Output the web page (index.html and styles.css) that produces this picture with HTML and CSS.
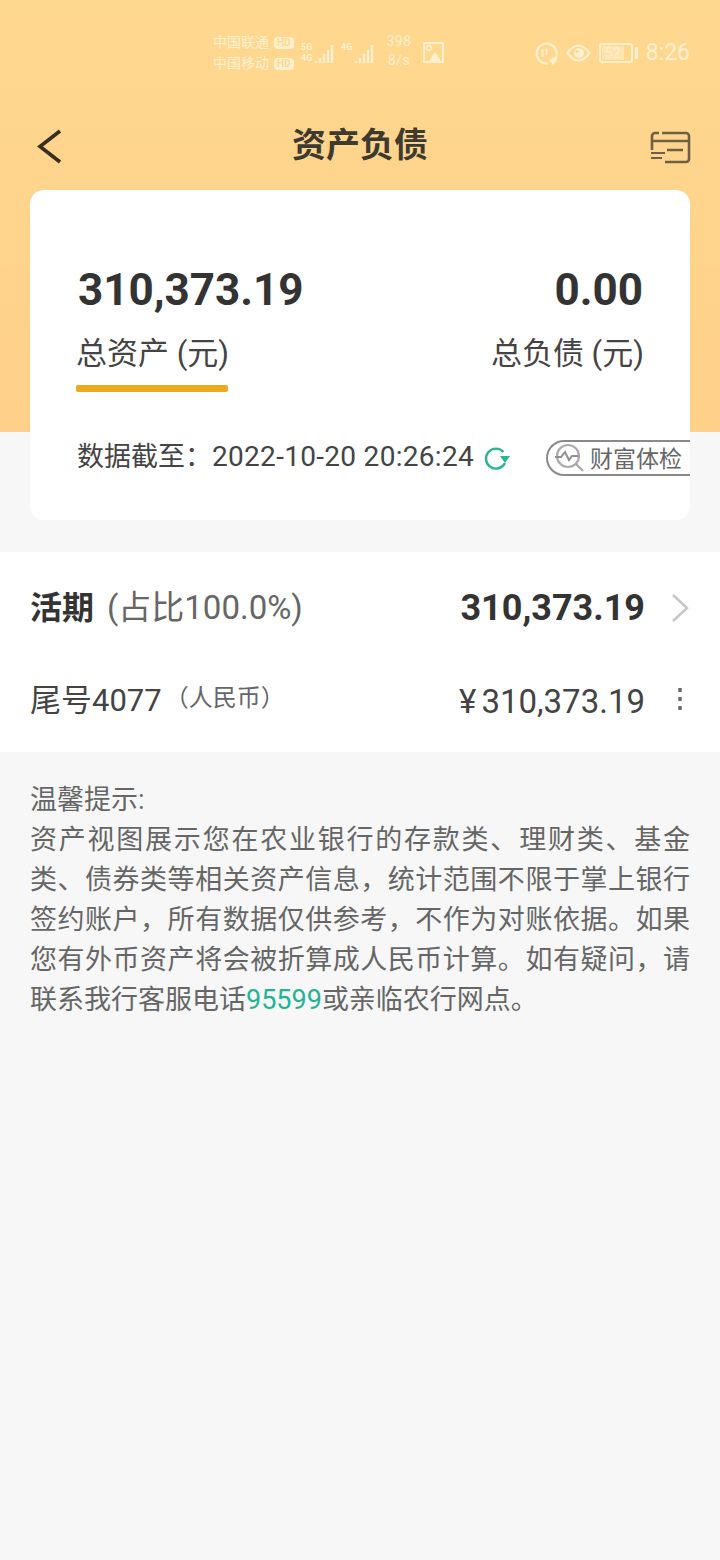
FILE: index.html
```html
<!DOCTYPE html>
<html>
<head>
    <title>资产负债</title>
    <link rel="stylesheet" href="styles.css">
</head>

<body>
    <div class="statusBar">
        <div class="carriers">
            <div class="carrier">中国联通<span class="hd">HD</span></div>
            <div class="carrier">中国移动<span class="hd">HD</span></div>
        </div>
        <div class="signal">
            <div class="signalLabel"><span>5G</span><span>4G</span></div>
            <svg width="20" height="22" viewBox="0 0 20 22"><path d="M2 21v-2M6 21v-5M10 21v-9M14 21v-13M18 21v-18" stroke="#fff0d0" stroke-width="2.400" fill="none"/></svg>
        </div>
        <div class="signal">
            <div class="signalLabel"><span>4G</span><span>&nbsp;</span></div>
            <svg width="20" height="22" viewBox="0 0 20 22"><path d="M2 21v-2M6 21v-5M10 21v-9M14 21v-13M18 21v-18" stroke="#fff0d0" stroke-width="2.400" fill="none"/></svg>
        </div>
        <div class="speed">398<br>8/s</div>
        <svg class="picIcon" width="21" height="21" viewBox="0 0 21 21">
            <rect x="1" y="1" width="19" height="19" fill="none" stroke="#fff0d0" stroke-width="2"/>
            <circle cx="6" cy="6" r="2.500" fill="none" stroke="#fff0d0" stroke-width="1.300"/>
            <path d="M6 19l6-9 6 9z" fill="#fff0d0"/>
        </svg>
        <div class="statusRight">
            <svg width="23" height="23" viewBox="0 0 23 23">
                <path d="M13 21.500a10 10 0 1 1 8.500-8" fill="none" stroke="#fff0d0" stroke-width="2.200"/>
                <path d="M7.500 7v8M11.500 6.500v7" stroke="#fff0d0" stroke-width="1.800"/>
                <path d="M14 18l8-4v4l-4 5z" fill="#fff0d0"/>
            </svg>
            <svg width="25" height="18" viewBox="0 0 25 18">
                <path d="M1.500 9C5 4 9 1.500 12.500 1.500S20 4 23.500 9C20 14 16 16.500 12.500 16.500S5 14 1.500 9z" fill="none" stroke="#fff0d0" stroke-width="2.200"/>
                <circle cx="13" cy="9" r="5" fill="#fff0d0"/>
                <circle cx="11" cy="7.500" r="1.500" fill="#ffd88f"/>
            </svg>
            <div class="battery"><div class="batteryBody"><div class="batteryFill">52</div></div><div class="batteryTip"></div></div>
            <div class="clock">8:26</div>
        </div>
    </div>

    <div class="titleBar">
        <svg class="backIcon" width="26" height="36" viewBox="0 0 26 36"><path d="M24 2L4 17.500 24 33" fill="none" stroke="#3a2d1f" stroke-width="3.600"/></svg>
        <div class="pageTitle">资产负债</div>
        <svg class="cardIcon" width="42" height="34" viewBox="0 0 42 34">
            <path d="M2 20V6a3 3 0 0 1 3-3h4M12 3h24a3 3 0 0 1 3 3v23a3 3 0 0 1-3 3H15" fill="none" stroke="#6f6045" stroke-width="2.600"/>
            <path d="M3 11h36M17 20h16" stroke="#6f6045" stroke-width="2.600" fill="none"/>
            <path d="M1 23h14M1 28h11" stroke="#6f6045" stroke-width="2" fill="none"/>
        </svg>
    </div>

    <div class="summaryCard">
        <div class="totals">
            <div class="totalBlock">
                <div class="totalValue">310,373.19</div>
                <div class="totalLabel labelLeft">总资产 (元)</div>
                <div class="activeLine"></div>
            </div>
            <div class="totalBlock alignRight">
                <div class="totalValue">0.00</div>
                <div class="totalLabel labelRight">总负债 (元)</div>
            </div>
        </div>
        <div class="dataRow">
            <span class="dataDate">数据截至：<span class="dateDigits">2022-10-20 20:26:24</span></span>
            <svg class="refreshIcon" width="26" height="26" viewBox="0 0 26 26">
                <path d="M21 18a10 10 0 1 1-1.500-11" fill="none" stroke="#2cb592" stroke-width="2.400"/>
                <path d="M16 11h10l-5 7z" fill="#2cb592"/>
            </svg>
            <div class="checkButton">
                <svg width="32" height="32" viewBox="0 0 32 32">
                    <circle cx="15" cy="14" r="11" fill="none" stroke="#ababab" stroke-width="2.200"/>
                    <path d="M23 22l7 7" stroke="#ababab" stroke-width="2.400"/>
                    <path d="M2 15h6l4-5 4 8 3-4h6" fill="none" stroke="#8f8f8f" stroke-width="2"/>
                </svg>
                <span class="checkLabel">财富体检</span>
            </div>
        </div>
    </div>

    <div class="accountPanel">
        <div class="accountHead">
            <div class="headLeft"><span class="headName">活期</span><span class="headShare">(占比100.0%)</span></div>
            <div class="rowEnd">
                <span class="headAmount">310,373.19</span>
                <svg class="rowIcon" width="20" height="30" viewBox="0 0 20 30"><path d="M3 2l14 13L3 28" fill="none" stroke="#c6c6c6" stroke-width="2.400"/></svg>
            </div>
        </div>
        <div class="accountRow">
            <div class="rowLeft"><span class="tailNo">尾号4077</span><span class="currency">（人民币）</span></div>
            <div class="rowEnd">
                <span class="rowAmount"><span class="yen">¥</span>310,373.19</span>
                <svg class="rowIcon" width="20" height="26" viewBox="0 0 20 26"><path d="M10 2v4M10 11v4M10 20v4" stroke="#666" stroke-width="3.400" fill="none"/></svg>
            </div>
        </div>
    </div>

    <div class="notice">
        <div>温馨提示:</div>
        <div class="noticeText">资产视图展示您在农业银行的存款类、理财类、基金类、债券类等相关资产信息，统计范围不限于掌上银行签约账户，所有数据仅供参考，不作为对账依据。如果您有外币资产将会被折算成人民币计算。如有疑问，请联系我行客服电话<span class="phone">95599</span>或亲临农行网点。</div>
    </div>
</body>

</html>
```

FILE: styles.css
```css
html, body {
    margin: 0;
    padding: 0;
}

body {
    width: 720px;
    height: 1560px;
    overflow: hidden;
    background: linear-gradient(#ffd88f, #ffd08a) no-repeat 0 0 / 720px 432px, #f7f7f7;
    font-family: Roboto, "Noto Sans CJK SC", sans-serif;
    color: #333;
}

.statusBar {
    height: 106px;
    box-sizing: border-box;
    padding: 32px 30px 0 213px;
    display: flex;
    align-items: flex-start;
    color: #fff0d0;
}

.carriers {
    width: 88px;
    font-size: 14px;
    line-height: 21px;
}

.carrier {
    display: flex;
    align-items: center;
    white-space: nowrap;
}

.hd {
    margin-left: 5px;
    background: #fff0d0;
    color: #ffd88f;
    border-radius: 4px;
    font-size: 10px;
    line-height: 12px;
    padding: 0 3px;
    font-weight: 700;
}

.signal {
    flex: none;
    width: 34px;
    margin-top: 8px;
    display: flex;
    align-items: flex-end;
    height: 24px;
}

.signal + .signal {
    margin-left: 6px;
}

.signalLabel {
    width: 13px;
    font-size: 9px;
    line-height: 11px;
    font-weight: 700;
}

.signalLabel span {
    display: block;
}

.speed {
    margin-left: 10px;
    width: 28px;
    font-size: 14px;
    line-height: 19px;
    text-align: center;
    letter-spacing: 0.5px;
}

.picIcon {
    margin-left: 10px;
    margin-top: 10px;
}

.statusRight {
    position: absolute;
    right: 30px;
    top: 40px;
    display: flex;
    align-items: center;
    height: 26px;
    gap: 8px;
}

.battery {
    display: flex;
    align-items: center;
}

.batteryBody {
    width: 28px;
    height: 14px;
    border: 2px solid #fff0d0;
    border-radius: 3px;
    padding: 1px;
}

.batteryFill {
    width: 22px;
    height: 14px;
    background: #ffe4ab;
    font-size: 14px;
    line-height: 14px;
    text-align: center;
    color: #fff0d0;
}

.batteryTip {
    width: 3px;
    height: 12px;
    margin-left: 2px;
    background: #fff0d0;
    border-radius: 1px;
}

.clock {
    font-size: 23px;
    line-height: 26px;
    color: #fff0d0;
}

.titleBar {
    height: 84px;
    display: flex;
    align-items: center;
    justify-content: center;
    position: relative;
}

.pageTitle {
    font-size: 34px;
    font-weight: 700;
    color: #3f3a30;
    margin-top: -12px;
}

.backIcon {
    position: absolute;
    left: 36px;
    top: 23px;
}

.cardIcon {
    position: absolute;
    right: 28px;
    top: 24px;
}

.summaryCard {
    margin: 0 30px;
    height: 330px;
    box-sizing: border-box;
    padding: 66px 0 0 48px;
    background: #fff;
    border-radius: 14px;
    overflow: hidden;
}

.totals {
    display: flex;
    justify-content: space-between;
    padding-right: 47px;
}

.totalValue {
    font-size: 44px;
    line-height: 68px;
    font-weight: 700;
    color: #333;
}

.totalLabel {
    margin-top: 5px;
    font-size: 31px;
    line-height: 50px;
    color: #444;
}

.labelLeft {
    margin-left: -2px;
}

.labelRight {
    margin-right: -1px;
}

.alignRight {
    text-align: right;
}

.activeLine {
    width: 152px;
    height: 7px;
    margin: 6px 0 0 -2px;
    background: #ecab19;
    border-radius: 2px;
}

.dataRow {
    margin-top: 47px;
    display: flex;
    align-items: center;
    height: 38px;
    white-space: nowrap;
}

.dataDate {
    flex: none;
    font-size: 27px;
    color: #444;
    width: 406px;
    margin-left: -1px;
    margin-right: 1px;
    padding-bottom: 8px;
}

.dateDigits {
    font-size: 28px;
    letter-spacing: 0.3px;
}

.refreshIcon {
    flex: none;
}

.checkButton {
    margin-left: 36px;
    width: 160px;
    flex: none;
    height: 36px;
    box-sizing: border-box;
    border: 2px solid #8a8a8a;
    border-right: none;
    border-radius: 18px 0 0 18px;
    display: flex;
    align-items: center;
    padding-left: 5px;
    gap: 5px;
    font-size: 23px;
    color: #666;
}

.checkLabel {
    padding-bottom: 3px;
}

.accountPanel {
    margin-top: 32px;
    height: 200px;
    background: #fff;
    padding: 0 30px;
    box-sizing: border-box;
}

.accountHead {
    height: 112px;
    display: flex;
    align-items: center;
    justify-content: space-between;
}

.accountRow {
    height: 70px;
    display: flex;
    align-items: center;
    justify-content: space-between;
}

.headLeft {
    margin-bottom: 6px;
}

.headName {
    font-size: 32px;
    font-weight: 700;
}

.headShare {
    margin-left: 13px;
    font-size: 33px;
    color: #666;
}

.rowLeft {
    display: flex;
    align-items: center;
    margin-bottom: 4px;
}

.rowEnd {
    display: flex;
    align-items: center;
}

.headAmount {
    font-size: 36px;
    font-weight: 700;
}

.rowIcon {
    margin-left: 25px;
}

.tailNo {
    font-size: 31px;
    color: #444;
}

.currency {
    font-size: 24px;
    color: #666;
    margin-left: 3px;
    padding-bottom: 4px;
}

.rowAmount {
    font-size: 33px;
    color: #444;
    padding-top: 4px;
}

.yen {
    margin-right: 5px;
}

.notice {
    margin-top: 28px;
    padding: 0 30px;
    font-size: 27px;
    line-height: 40px;
    color: #666;
}

.noticeText {
    text-align: justify;
}

.phone {
    color: #1fb594;
}
```
